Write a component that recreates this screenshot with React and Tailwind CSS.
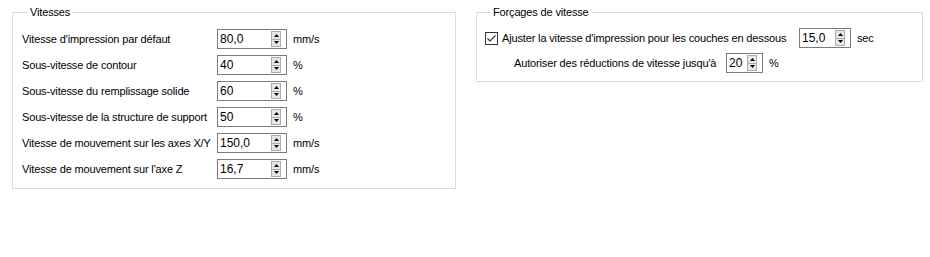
import React from "react";

function Spin() {
  return (
    <div className="flex h-[16px] w-[10px] flex-col border border-[#acacac] bg-[#e8e8e8]">
      <div className="flex flex-1 items-center justify-center border-b border-[#acacac]">
        <svg width="5" height="3" viewBox="0 0 5 3"><polygon points="2.5,0 5,3 0,3" fill="#000" /></svg>
      </div>
      <div className="flex flex-1 items-center justify-center">
        <svg width="5" height="3" viewBox="0 0 5 3"><polygon points="0,0 5,0 2.5,3" fill="#000" /></svg>
      </div>
    </div>
  );
}

function Input({ value, w }) {
  return (
    <div className={`flex h-[20px] items-center justify-between border border-[#7a7a7a] bg-white pl-[2px] pr-[5px] text-[12px] tracking-normal ${w}`}>
      <span className="leading-none">{value}</span>
      <Spin />
    </div>
  );
}

const rows = [
  ["Vitesse d'impression par défaut", "80,0", "mm/s"],
  ["Sous-vitesse de contour", "40", "%"],
  ["Sous-vitesse du remplissage solide", "60", "%"],
  ["Sous-vitesse de la structure de support", "50", "%"],
  ["Vitesse de mouvement sur les axes X/Y", "150,0", "mm/s"],
  ["Vitesse de mouvement sur l'axe Z", "16,7", "mm/s"],
];

export default function App() {
  return (
    <div className="h-[257px] w-[930px] whitespace-nowrap bg-white text-[11px] tracking-[-0.15px] text-black" style={{ fontFamily: '"Liberation Sans", sans-serif' }}>
      <div className="flex items-start gap-[20px] pl-[12px] pt-[5px]">
        <fieldset className="h-[184px] w-[444px] border border-[#dcdcdc] pl-[9px]">
          <legend className="ml-[6px] px-[2px] leading-[14px]">Vitesses</legend>
          <div className="mt-[10px] flex flex-col gap-[6px]">
            {rows.map(([l, v, u]) => (
              <div key={l} className="flex h-[20px] items-center">
                <span className="w-[195px]">{l}</span>
                <Input value={v} w="w-[70px]" />
                <span className="ml-[6px]">{u}</span>
              </div>
            ))}
          </div>
        </fieldset>
        <fieldset className="h-[77px] w-[447px] border border-[#dcdcdc] pl-[8px]">
          <legend className="ml-[6px] px-[2px] leading-[14px]">Forçages de vitesse</legend>
          <div className="mt-[9px] flex h-[20px] items-center">
            <div className="flex h-[13px] w-[13px] items-center justify-center border border-[#333]">
              <svg width="9" height="7" viewBox="0 0 9 7"><polyline points="0.5,3.5 3,6 8.5,0.5" fill="none" stroke="#333" strokeWidth="1.2" /></svg>
            </div>
            <span className="ml-[4px] w-[297px]">Ajuster la vitesse d'impression pour les couches en dessous</span>
            <Input value="15,0" w="w-[52px]" />
            <span className="ml-[6px]">sec</span>
          </div>
          <div className="mt-[5px] flex h-[20px] items-center pl-[29px]">
            <span className="w-[212px]">Autoriser des réductions de vitesse jusqu'à</span>
            <Input value="20" w="w-[37px]" />
            <span className="ml-[6px]">%</span>
          </div>
        </fieldset>
      </div>
    </div>
  );
}
